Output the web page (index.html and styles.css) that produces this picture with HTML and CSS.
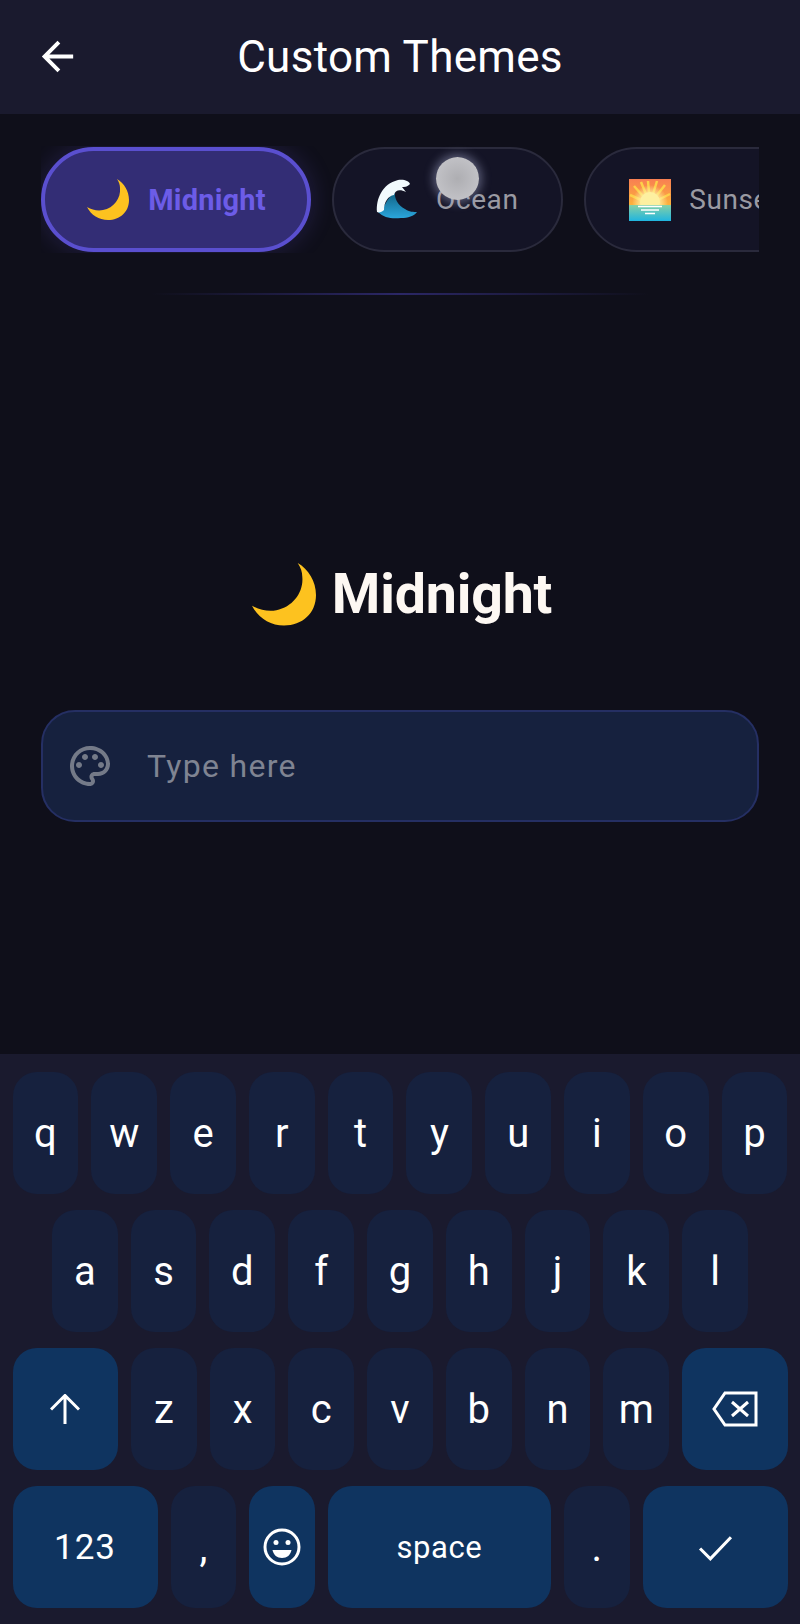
FILE: index.html
```html
<!doctype html>
<html>
  <head>
    <meta charset="utf-8" />
    <title>Custom Themes</title>
    <meta name="viewport" content="width=device-width, initial-scale=1.0" />
    <link rel="stylesheet" href="styles.css">
  </head>
  <body>
    <div class="app">
      <header class="app-bar">
        <svg class="back-icon" viewBox="0 0 24 24"><path d="M20 11H7.83l5.59-5.59L12 4l-8 8 8 8 1.41-1.41L7.83 13H20z" /></svg>
        <h1 class="app-title">Custom Themes</h1>
      </header>

      <main class="content">
        <div class="chips">
          <div class="chip selected">
            <svg class="chip-emoji" viewBox="0 0 42 42"><path class="moon" d="M30 0C37 4 42 12 42 21C42 33 33 41 21 41C12 41 4 36 0 28C5 31 11 32 16 31C27 29 34 19 33 9C33 6 32 3 30 0Z" /></svg>
            <span>Midnight</span>
          </div>
          <div class="chip">
            <svg class="chip-emoji" viewBox="0 0 42 42">
              <defs>
                <linearGradient id="water" x1="0" y1="0" x2="0" y2="1">
                  <stop offset="0" stop-color="#0f5f80" />
                  <stop offset="1" stop-color="#2ba6dc" />
                </linearGradient>
              </defs>
              <path fill="url(#water)" d="M19 12C18 20 22 26 29 30C33 33 38 33 41 33C38 37 32 39 25 39C16 40 8 39 2 33C8 30 10 22 14 18Z" />
              <path fill="#f2fafd" d="M1 33C0 20 6 5 22 1C28 0 33 2 34 5C31 8 29 8 26 8L30 13C24 10 19 11 18 16C12 17 8 23 8 31C6 33 3 34 1 33Z" />
            </svg>
            <span>Ocean</span>
          </div>
          <div class="chip chip-wide">
            <svg class="chip-emoji" viewBox="0 0 42 42">
              <defs>
                <linearGradient id="sky" x1="0" y1="0" x2="0" y2="1">
                  <stop offset="0" stop-color="#f87f52" />
                  <stop offset="1" stop-color="#fcb13c" />
                </linearGradient>
                <linearGradient id="sea" x1="0" y1="0" x2="0" y2="1">
                  <stop offset="0" stop-color="#86d0a6" />
                  <stop offset="1" stop-color="#1fb5e0" />
                </linearGradient>
                <radialGradient id="glow">
                  <stop offset="0.4" stop-color="#fff3a8" />
                  <stop offset="1" stop-color="#fff3a8" stop-opacity="0" />
                </radialGradient>
              </defs>
              <rect width="42" height="26" fill="url(#sky)" />
              <path class="rays" d="M21 25L19 2M21 25L12 3M21 25L28 2M21 25L36 6M21 25L5 7M21 25L1 16M21 25L41 15" />
              <circle cx="21" cy="24" r="18" fill="url(#glow)" />
              <circle cx="21" cy="23" r="10" fill="#fdf0a0" />
              <rect y="26" width="42" height="16" fill="url(#sea)" />
              <path class="ripples" d="M9 27.500H33M12 31H30M16 34.500H26" />
            </svg>
            <span>Sunset</span>
          </div>
        </div>

        <div class="divider"></div>

        <div class="preview">
          <svg class="preview-emoji" viewBox="0 0 42 42"><path class="moon" d="M30 0C37 4 42 12 42 21C42 33 33 41 21 41C12 41 4 36 0 28C5 31 11 32 16 31C27 29 34 19 33 9C33 6 32 3 30 0Z" /></svg>
          <h2 class="preview-title">Midnight</h2>
        </div>

        <div class="field">
          <svg class="palette-icon" viewBox="0 0 24 24"><path d="M12 2C6.49 2 2 6.49 2 12s4.49 10 10 10c1.38 0 2.5-1.12 2.5-2.5 0-.61-.23-1.2-.64-1.67-.08-.1-.13-.21-.13-.33 0-.28.22-.5.5-.5H16c3.31 0 6-2.69 6-6 0-4.96-4.49-9-10-9zm5.5 11c-.83 0-1.5-.67-1.5-1.5s.67-1.5 1.5-1.5 1.5.67 1.5 1.5-.67 1.5-1.5 1.5zm-3-4c-.83 0-1.5-.67-1.5-1.5S13.67 6 14.5 6s1.5.67 1.5 1.5S15.33 9 14.5 9zM5 11.5c0-.83.67-1.5 1.5-1.5s1.5.67 1.5 1.5S7.33 13 6.5 13 5 12.33 5 11.5zm6-4c0 .83-.67 1.5-1.5 1.5S8 8.33 8 7.5 8.67 6 9.5 6s1.5.67 1.5 1.5zM16 15h-1.77c-1.38 0-2.5 1.12-2.5 2.5 0 .61.22 1.2.63 1.67.08.1.14.21.14.33 0 .28-.22.5-.5.5-4.41 0-8-3.59-8-8s3.59-8 8-8 8 3.14 8 7c0 2.21-1.79 4-4 4z" fill-rule="evenodd" /></svg>
          <span class="placeholder">Type here</span>
        </div>
      </main>

      <section class="keyboard">
        <div class="key-row">
          <div class="key">q</div><div class="key">w</div><div class="key">e</div><div class="key">r</div><div class="key">t</div>
          <div class="key">y</div><div class="key">u</div><div class="key">i</div><div class="key">o</div><div class="key">p</div>
        </div>
        <div class="key-row home-row">
          <div class="key">a</div><div class="key">s</div><div class="key">d</div><div class="key">f</div><div class="key">g</div>
          <div class="key">h</div><div class="key">j</div><div class="key">k</div><div class="key">l</div>
        </div>
        <div class="key-row">
          <div class="key action shift-key">
            <svg class="key-icon" viewBox="0 0 30 30"><path d="M15 30V2M1 15.500L15 1.500L29 15.500" /></svg>
          </div>
          <div class="key">z</div><div class="key">x</div><div class="key">c</div><div class="key">v</div>
          <div class="key">b</div><div class="key">n</div><div class="key">m</div>
          <div class="key action shift-key">
            <svg class="key-icon wide-icon" viewBox="0 0 46 36"><path d="M13 2H44V34H13L2 18ZM20 11L36 25M36 11L20 25" /></svg>
          </div>
        </div>
        <div class="key-row">
          <div class="key action num-key small-text">123</div>
          <div class="key">,</div>
          <div class="key action">
            <svg class="emoji-icon" viewBox="0 0 38 38">
              <circle class="face" cx="19" cy="19" r="17" />
              <circle cx="13" cy="14.500" r="2.500" />
              <circle cx="25" cy="14.500" r="2.500" />
              <path d="M9.500 22H28.500C27.500 27 24 30 19 30C14 30 10.500 27 9.500 22Z" />
            </svg>
          </div>
          <div class="key action space-key">space</div>
          <div class="key">.</div>
          <div class="key action num-key">
            <svg class="key-icon check-icon" viewBox="0 0 34 26"><path d="M2 14L12 24L32 3" /></svg>
          </div>
        </div>
      </section>

      <div class="touch-dot"></div>
    </div>
  </body>
</html>
```

FILE: styles.css
```css
:root {
  --color-bg: #0f0f1a;
  --color-bar: #1a1a2e;
  --color-text: #ffffff;
  --color-accent: #6c5ce7;
  --color-muted: #9a9aa2;
  --color-field: #16213e;
  --color-key: #16213e;
  --color-action: #0f3460;
}
* {
  margin: 0;
  padding: 0;
  box-sizing: border-box;
}
html,
body {
  width: 800px;
  height: 1624px;
  overflow: hidden;
  background: var(--color-bg);
  color: var(--color-text);
  font-family: Roboto, "Noto Sans", sans-serif;
}
.app {
  position: relative;
  height: 1624px;
  display: flex;
  flex-direction: column;
}
.app-bar {
  height: 114px;
  flex: none;
  background: var(--color-bar);
  display: flex;
  align-items: center;
  justify-content: center;
  position: relative;
}
.back-icon {
  position: absolute;
  left: 34px;
  top: 33px;
  width: 47px;
  height: 47px;
  fill: var(--color-text);
}
.app-title {
  font-size: 44px;
  font-weight: 400;
  letter-spacing: 0.3px;
}
.content {
  flex: 1;
  display: flex;
  flex-direction: column;
  padding: 32px 41px 0;
}
.chips {
  display: flex;
  gap: 21px;
  height: 107px;
  padding: 1px 0;
  overflow: hidden;
}
.chip {
  flex: none;
  width: 230.5px;
  height: 105px;
  display: flex;
  align-items: center;
  justify-content: center;
  gap: 18px;
  border-radius: 53px;
  border: 2px solid #2a2a3c;
  background: #141426;
  color: var(--color-muted);
  font-size: 28px;
  letter-spacing: 0.6px;
}
.chip.selected {
  width: 270px;
  padding-left: 1px;
  gap: 19px;
  border: 4px solid #5a4fcf;
  background: #332d75;
  color: var(--color-accent);
  font-size: 29px;
  font-weight: 700;
  letter-spacing: 0.2px;
  box-shadow: 0 0 24px rgba(108, 92, 231, 0.22);
}
.chip-wide {
  width: 241px;
}
.chip-emoji {
  width: 42px;
  height: 42px;
  flex: none;
}
.moon {
  fill: #fdc21f;
}
.rays {
  fill: none;
  stroke: #fdd04a;
  stroke-width: 2.5px;
}
.ripples {
  fill: none;
  stroke: #ffffff;
  stroke-width: 1.5px;
}
.divider {
  height: 2px;
  margin: 40px 110px 0;
  background: linear-gradient(to right, transparent, #2b2766 50%, transparent);
}
.preview {
  margin-top: 267px;
  padding-left: 4px;
  display: flex;
  align-items: center;
  justify-content: center;
  gap: 16px;
}
.preview-emoji {
  width: 64px;
  height: 64px;
  flex: none;
}
.preview-title {
  font-size: 55.5px;
  font-weight: 700;
  letter-spacing: -0.2px;
  color: #fdf8f3;
}
.field {
  margin-top: 83px;
  height: 112px;
  display: flex;
  align-items: center;
  gap: 33px;
  padding-left: 23px;
  background: var(--color-field);
  border: 2px solid #252f63;
  border-radius: 34px;
}
.palette-icon {
  width: 48px;
  height: 48px;
  flex: none;
  fill: #747a88;
}
.placeholder {
  font-size: 32px;
  letter-spacing: 1.3px;
  color: #7f8492;
}
.keyboard {
  height: 570px;
  flex: none;
  background: var(--color-bar);
  padding: 18px 12.5px 0;
  display: flex;
  flex-direction: column;
  gap: 16px;
}
.key-row {
  display: flex;
  gap: 13px;
  height: 122px;
}
.home-row {
  padding: 0 39.4px;
}
.key {
  flex: 1 1 0;
  min-width: 0;
  display: flex;
  align-items: center;
  justify-content: center;
  background: var(--color-key);
  border-radius: 24px;
  font-size: 40px;
}
.key.action {
  background: var(--color-action);
}
.shift-key {
  flex: 0 0 105.5px;
}
.num-key {
  flex: 0 0 145px;
}
.space-key {
  flex: 0 0 223px;
  font-size: 31px;
  letter-spacing: 0.6px;
}
.small-text {
  font-size: 35px;
  letter-spacing: 1px;
}
.key-icon {
  width: 30px;
  height: 30px;
  fill: none;
  stroke: var(--color-text);
  stroke-width: 3px;
}
.wide-icon {
  width: 46px;
  height: 36px;
}
.check-icon {
  width: 35px;
  height: 27px;
}
.emoji-icon {
  width: 38px;
  height: 38px;
  fill: var(--color-text);
}
.face {
  fill: none;
  stroke: var(--color-text);
  stroke-width: 3px;
}
.touch-dot {
  position: absolute;
  left: 436px;
  top: 157px;
  width: 43px;
  height: 43px;
  border-radius: 50%;
  background: radial-gradient(circle, #aeaeb2, #c9c9ce);
  box-shadow: 0 0 10px 3px rgba(190, 195, 235, 0.4);
}
```
